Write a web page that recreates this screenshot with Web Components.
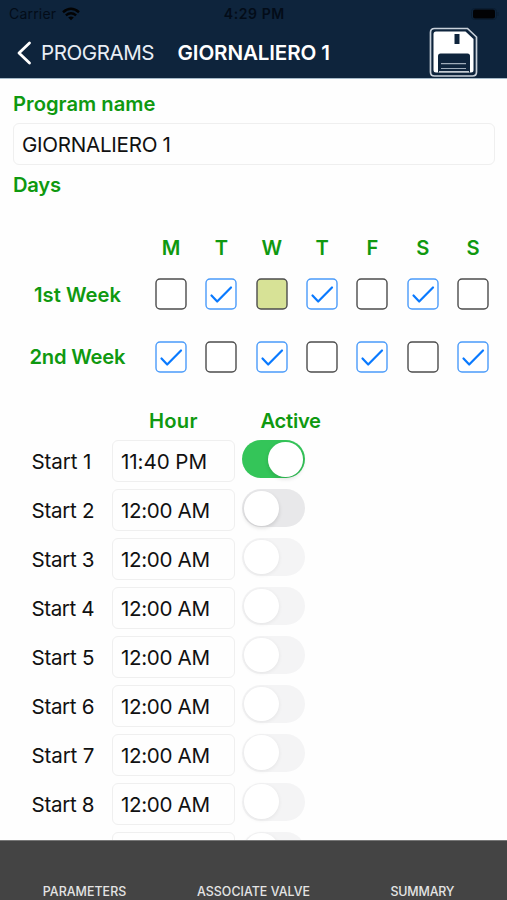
<!DOCTYPE html>
<html lang="en"><head><meta charset="utf-8"><title>Program editor</title>
<style>
html,body{margin:0;height:100%;overflow:hidden;background:#fefefe}
body{font-family:Inter,"Liberation Sans",sans-serif;font-size:20.6px;color:#111}
</style></head><body>
<program-page></program-page>
<script>
const root = (el, html) => { const r = el.attachShadow({mode:'open'}); r.innerHTML = html; return r; };

/* A one-line label, tracked so that it occupies a given width */
customElements.define('fit-label', class extends HTMLElement {
  constructor(){ super(); root(this, `<style>:host{display:block;white-space:nowrap;line-height:24px}span{display:inline-block}</style><span><slot></slot></span>`); }
  connectedCallback(){
    const w = +this.getAttribute('w'), s = this.shadowRoot.querySelector('span');
    if(!w) return;
    s.style.letterSpacing = '0px';
    const gap = (w - s.getBoundingClientRect().width) / (this.textContent.length - 1);
    s.style.letterSpacing = gap + 'px';
    s.style.marginRight = -gap + 'px';
  }
});

customElements.define('status-bar', class extends HTMLElement {
  constructor(){ super(); root(this, `<style>
:host{display:grid;grid-template-columns:1fr auto 1fr;height:28px;align-items:center;color:#030c18;font-size:14px;box-sizing:border-box;padding:0 8px 0 9px}
.l{display:flex;align-items:center;gap:6px}.r{justify-self:end;display:flex;align-items:center}
svg{display:block}fit-label{line-height:28px}</style>
<div class="l"><fit-label w="47">Carrier</fit-label>
<svg width="18" height="14" viewBox="0 0 18 14"><g fill="none" stroke="#030303" stroke-width="2.5"><path d="M1 5.2Q9-1.6 17 5.2"/><path d="M3.9 8.4Q9 4.2 14.1 8.4"/></g><path d="M9 13.2L6.2 10.4Q9 8.4 11.8 10.4Z" fill="#030303"/></svg></div>
<fit-label w="60.5" style="font-weight:600">4:29 PM</fit-label>
<div class="r"><svg width="28" height="12"><rect x=".5" y=".5" width="25" height="11" rx="3" fill="none" stroke="#0a1c30"/><rect x="2" y="1.5" width="22" height="9" rx="2" fill="#020204"/><path d="M27 4v4" stroke="#0a1c30"/></svg></div>`); }
});

customElements.define('save-icon', class extends HTMLElement {
  constructor(){ super(); root(this, `<style>:host{display:block;width:50px;height:52px}svg{display:block}</style>
<svg width="50" height="52" viewBox="0 0 50 52"><path d="M5.5 1.500H38.5L47.5 10V45Q47.5 49 43.5 49H5.500Q1.500 49 1.500 45V5.500Q1.500 1.500 5.500 1.500Z" fill="#0e243c" stroke="#c9d1da" stroke-width="1.7"/>
<path d="M7 4.500H36.500L44.500 12V43Q44.500 45.500 42 45.500H7Q4.500 45.500 4.500 43V7Q4.500 4.500 7 4.500Z" fill="#fff"/>
<path d="M25.500 7h5v10h-5z" fill="#0e243c"/><path d="M9 45.500V29Q9 26.500 11.500 26.500H38.500Q41 26.500 41 29V45.500Z" fill="#0e243c"/>
<path d="M12 36.700h25M12 41.500h25" stroke="#9eabb9" stroke-width="1.200"/><path d="M10 44.800h30" stroke="#dbe0e6" stroke-width="1.400"/></svg>`); }
});

customElements.define('nav-bar', class extends HTMLElement {
  constructor(){ super(); root(this, `<style>
:host{display:block;height:79px;background:#0e243c;border-bottom:1px solid #a5b9c8;box-sizing:border-box}
.n{display:flex;height:50px;align-items:center;color:#fff;padding:0 28.500px 0 15.500px}
.b{color:#e9eef5;margin-left:9.500px}.t{font-weight:600;margin-left:23px}save-icon{margin-left:auto}svg{display:block}</style>
<status-bar></status-bar><div class="n"><svg width="16" height="24" viewBox="0 0 16 24"><path d="M13.500 2L3 12L13.500 22" fill="none" stroke="#fff" stroke-width="2.800" stroke-linecap="round" stroke-linejoin="round"/></svg>
<fit-label class="b" w="113.5">PROGRAMS</fit-label><fit-label class="t" w="152.5">GIORNALIERO 1</fit-label><save-icon></save-icon></div>`); }
});

customElements.define('text-box', class extends HTMLElement {
  constructor(){ super(); root(this, `<style>:host{display:flex;align-items:center;box-sizing:border-box;height:42px;border:1px solid #efefef;border-radius:6px;padding:2px 0 0 8px;background:#fefefe}</style><slot></slot>`); }
});

customElements.define('check-box', class extends HTMLElement {
  constructor(){ super(); root(this, `<style>:host{display:block;width:32px;height:32px}svg{display:block}
rect{fill:#fff;stroke:#4c4c4c;stroke-width:1.400}path{display:none;fill:none;stroke:#0a7aff;stroke-width:2.200;stroke-linecap:round;stroke-linejoin:round}
:host([checked]) rect{stroke:#4a9bfa}:host([checked]) path{display:block}:host([today]) rect{fill:#d7e296}</style>
<svg width="32" height="32" viewBox="0 0 32 32"><rect x="1" y="1" width="30" height="30" rx="4"/><path d="M6.500 17.500L12.200 23.500L26 9.500"/></svg>`); }
});

customElements.define('week-grid', class extends HTMLElement {
  constructor(){ super();
    const row = (name, w, on, today) => `<fit-label class="w" w="${w}">${name}</fit-label>` +
      [...on].map((c,i)=>`<check-box ${c==='1'?'checked':''} ${i===today?'today':''}></check-box>`).join('');
    root(this, `<style>:host{display:grid;grid-template-columns:146px repeat(7,50.330px);grid-template-rows:32px 62.500px 62.500px;justify-items:center;align-items:center;color:#0f9910;font-weight:600}
.w{padding:1px 0 0 9px}fit-label{font-size:20.200px}</style><span></span>${[...'MTWTFSS'].map(d=>`<fit-label style="padding-top:1px">${d}</fit-label>`).join('')}
${row('1st Week',87,'0101010',2)}${row('2nd Week',96,'1010101',-1)}`); }
});

customElements.define('toggle-switch', class extends HTMLElement {
  constructor(){ super(); root(this, `<style>:host{display:flex;align-items:center;box-sizing:border-box;width:62.500px;height:38px;border-radius:19px;background:#e8e8ea;padding:0 2px}
i{width:34.500px;height:34.500px;border-radius:50%;background:#fff;box-shadow:0 2px 4px #0002}
:host([on]){background:#34c559;justify-content:flex-end}:host([disabled]){background:#f4f4f5}:host([disabled]) i{box-shadow:0 1px 4px #00000012}</style><i></i>`); }
});

/* A start without a number is the empty row at the end of the list */
customElements.define('start-row', class extends HTMLElement {
  connectedCallback(){ if(this.shadowRoot) return;
    const n=+this.getAttribute('n'), t=this.getAttribute('time');
    root(this, `<style>:host{display:grid;grid-template-columns:80.500px 123px 63px;height:48.900px;align-items:start;padding-left:31.500px}
.s{line-height:44px}toggle-switch{margin-left:7px}</style>
${n?`<fit-label class="s" w="${n===1?60:63}">Start ${n}</fit-label>`:'<span></span>'}<text-box>${t?`<fit-label w="${n===1?86:89}">${t}</fit-label>`:''}</text-box>
<toggle-switch ${n===1?'on':n===2?'':'disabled'}></toggle-switch>`); }
});

customElements.define('tab-bar', class extends HTMLElement {
  constructor(){ super(); root(this, `<style>:host{display:grid;grid-template-columns:repeat(3,1fr);justify-items:center;align-items:end;box-sizing:border-box;height:60px;background:#444;border-top:1px solid #777;color:#e4e4e4;font-size:12.400px;font-weight:500}
fit-label{line-height:17px}</style><fit-label w="83.5">PARAMETERS</fit-label><fit-label w="113">ASSOCIATE VALVE</fit-label><fit-label w="64">SUMMARY</fit-label>`); }
});

customElements.define('program-page', class extends HTMLElement {
  constructor(){ super(); root(this, `<style>
:host{display:flex;flex-direction:column;height:900px;width:507px}
main{flex:1;min-height:0;overflow:hidden}
.h{color:#0f9910;font-weight:600;font-size:20.200px}.f{margin:0 12px 0 13px}
.p{margin:13px 0 7px 13px}.d{margin:8px 0 0 13px}
week-grid{margin-top:34px}
.c{display:grid;grid-template-columns:112px 123px 1fr;margin-top:21.400px;height:31px}
.c .a{margin-left:25.500px}.c .o{margin-left:37px}</style>
<nav-bar></nav-bar><main><fit-label class="h p" w="142.5">Program name</fit-label>
<text-box class="f"><fit-label w="149">GIORNALIERO 1</fit-label></text-box>
<fit-label class="h d" w="48">Days</fit-label><week-grid></week-grid>
<div class="c h"><span></span><fit-label class="o" w="48.500">Hour</fit-label><fit-label class="a" w="60.5">Active</fit-label></div>
${Array.from({length:8},(_,i)=>`<start-row n="${i+1}" time="${i?'12:00 AM':'11:40 PM'}"></start-row>`).join('')}<start-row></start-row>
</main><tab-bar></tab-bar>`); }
});
</script></body></html>
